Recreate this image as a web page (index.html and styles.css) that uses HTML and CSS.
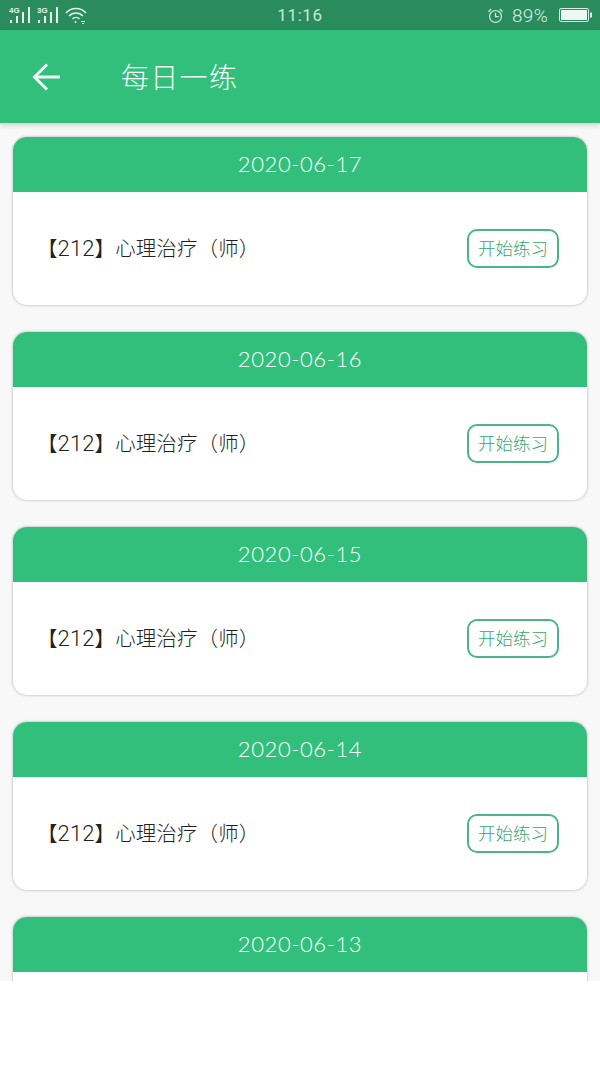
FILE: index.html
```html
<!DOCTYPE html>
<html lang="zh">
<head>
<meta charset="utf-8">
<title>每日一练</title>
<link rel="stylesheet" href="styles.css">
</head>
<body>
<div class="screen">
  <div class="status">
    <div class="status-left">
      <svg class="sig" viewBox="0 0 22 18" width="22" height="18"><text x="0" y="7" class="net">4G</text><g fill="#e4f5ec"><rect x="1" y="14" width="2" height="3"/><rect x="7" y="10" width="2" height="7"/><rect x="13" y="6" width="2" height="11"/><rect x="19" y="1" width="2" height="16"/></g></svg>
      <svg class="sig" viewBox="0 0 22 18" width="22" height="18"><text x="0" y="7" class="net">3G</text><g fill="#e4f5ec"><rect x="1" y="14" width="2" height="3"/><rect x="7" y="10" width="2" height="7"/><rect x="13" y="6" width="2" height="11"/><rect x="19" y="1" width="2" height="16"/></g></svg>
      <svg class="wifi" viewBox="0 0 22 18" width="22" height="18" fill="none" stroke="#e4f5ec" stroke-width="1.5"><path d="M1 7 C6 1 16 1 21 7"/><path d="M4 10 C8 6 14 6 18 10"/><path d="M7.500 13 C9.500 11 12.500 11 14.500 13"/><circle cx="10.500" cy="16" r="1" fill="#e4f5ec" stroke="none"/><path d="M16 15.500h4M17 17.500h2" stroke-width="1"/></svg>
    </div>
    <div class="clock">11:16</div>
    <div class="status-right">
      <svg class="alarm" viewBox="0 0 18 18" width="17" height="17" fill="none" stroke="#cdeedd" stroke-width="1.300"><circle cx="9" cy="10" r="6.300"/><path d="M9 6v4.300h3.500"/><path d="M1.500 5 L4.500 2 M16.500 5 L13.500 2"/></svg>
      <span class="pct">89%</span>
      <svg class="batt" viewBox="0 0 33 16" width="33" height="16"><rect x="0.500" y="1.500" width="29" height="13" rx="1.500" fill="none" stroke="#d5f0e2"/><rect x="2" y="3" width="26" height="10" fill="#eef8f3"/><rect x="31" y="5.500" width="2" height="5" fill="#d5f0e2"/></svg>
    </div>
  </div>
  <header class="bar">
    <svg class="back" viewBox="0 0 28 28" width="28" height="28" fill="none" stroke="#f2fbf6" stroke-width="3"><path d="M2.500 14H28"/><path d="M15 1.500 L2.500 14 L15 26.500"/></svg>
    <h1 class="title">每日一练</h1>
  </header>
  <main class="list">
    <section class="card">
      <div class="date">2020-06-17</div>
      <div class="row"><span class="name">【<span class="num">212</span>】心理治疗（师）</span><button class="start">开始练习</button></div>
    </section>
    <section class="card">
      <div class="date">2020-06-16</div>
      <div class="row"><span class="name">【<span class="num">212</span>】心理治疗（师）</span><button class="start">开始练习</button></div>
    </section>
    <section class="card">
      <div class="date">2020-06-15</div>
      <div class="row"><span class="name">【<span class="num">212</span>】心理治疗（师）</span><button class="start">开始练习</button></div>
    </section>
    <section class="card">
      <div class="date">2020-06-14</div>
      <div class="row"><span class="name">【<span class="num">212</span>】心理治疗（师）</span><button class="start">开始练习</button></div>
    </section>
    <section class="card">
      <div class="date">2020-06-13</div>
      <div class="row"></div>
    </section>
  </main>
</div>
</body>
</html>
```
FILE: styles.css
```css
html, body {
  margin: 0;
  padding: 0;
  background: #fff;
}
body {
  height: 1067px;
  overflow: hidden;
  font-family: "Noto Sans CJK SC", "Noto Sans", sans-serif;
}
.screen {
  width: 600px;
  height: 981px;
  display: flex;
  flex-direction: column;
  overflow: hidden;
  background: #f8f8f8;
}
.status {
  flex: none;
  height: 30px;
  background: #2a8c5c;
  display: flex;
  align-items: center;
  justify-content: space-between;
  padding: 0 9px;
  color: #d5f0e2;
}
.status-left, .status-right {
  width: 200px;
  display: flex;
  align-items: center;
}
.status-left { gap: 6px; }
.status-right { justify-content: flex-end; gap: 8px; }
.batt { margin-left: 3px; margin-right: -1px; }
.net {
  font-family: "Liberation Sans", sans-serif;
  font-size: 8px;
  font-weight: 700;
  fill: #e4f5ec;
}
.clock {
  font-family: "Roboto", sans-serif;
  font-size: 17px;
  font-weight: 400;
  letter-spacing: 0.6px;
  color: #c4e8d6;
}
.pct {
  font-family: "Roboto", sans-serif;
  font-size: 19px;
  font-weight: 300;
  letter-spacing: 0.3px;
}
.bar {
  flex: none;
  height: 93px;
  background: #32bf7b;
  display: flex;
  align-items: center;
  padding-left: 32px;
  box-shadow: 0 2px 5px rgba(0, 0, 0, 0.18);
  position: relative;
  z-index: 1;
  box-sizing: border-box;
}
.back { flex: none; }
.title {
  margin: -2px 0 0 61px;
  font-size: 28px;
  font-weight: 300;
  color: #f2fbf6;
  line-height: 1;
  letter-spacing: 1.300px;
}
.list {
  flex: 1;
  display: flex;
  flex-direction: column;
  gap: 27px;
  padding: 14px 13px 0;
  min-height: 0;
}
.card {
  flex: none;
  height: 168px;
  border-radius: 14px;
  background: #fff;
  box-shadow: 0 0 3px rgba(0, 0, 0, 0.32);
  overflow: hidden;
  display: flex;
  flex-direction: column;
}
.date {
  flex: none;
  height: 55px;
  background: #32bf7b;
  color: #fff;
  display: flex;
  align-items: center;
  justify-content: center;
  font-family: "Lato", sans-serif;
  font-weight: 300;
  font-size: 22px;
  letter-spacing: 0.6px;
  padding-bottom: 3px;
  box-sizing: border-box;
}
.row {
  flex: 1;
  display: flex;
  align-items: center;
  justify-content: space-between;
  padding: 0 28px 1px 24px;
}
.name {
  font-size: 20.500px;
  font-weight: 300;
  color: #222;
  line-height: 1;
  letter-spacing: 0.1px;
}
.num {
  font-family: "Roboto", sans-serif;
  font-size: 22px;
  font-weight: 300;
}
.start {
  width: 92px;
  height: 39px;
  box-sizing: border-box;
  border: 2px solid #4cb587;
  border-radius: 10px;
  background: #fff;
  color: #35a571;
  font-family: inherit;
  font-size: 17.500px;
  font-weight: 300;
  padding: 0 0 1px;
  line-height: 1;
}
```
